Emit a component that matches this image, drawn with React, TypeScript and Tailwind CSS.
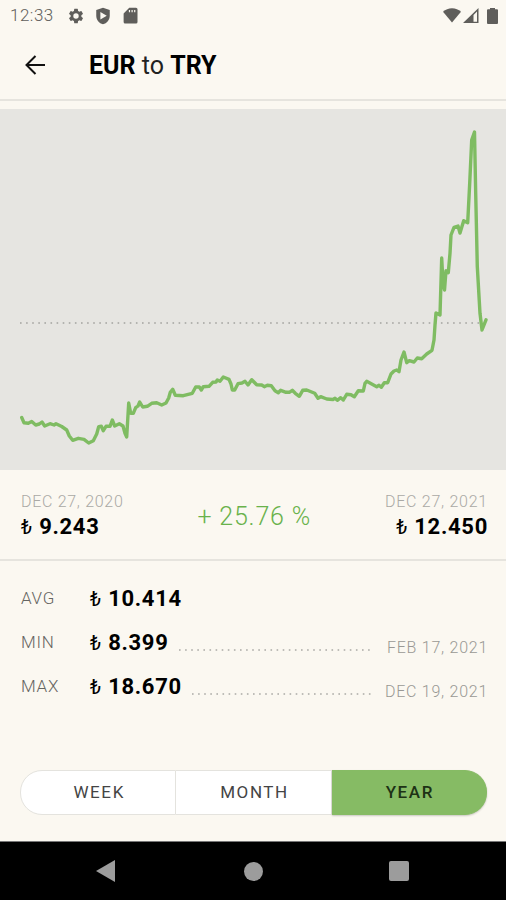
import React, { useState } from 'react';

interface StatRowProps {
    label: string;
    value: string;
    date?: string;
}

const periods = ['WEEK', 'MONTH', 'YEAR'];

// rate history as x,y pairs in the chart's viewBox
const ratePoints = [
    '21.7,417.5 24,422.7 28.3,423.2 31.7,421.5 35.7,425 39.3,424 42,422 44.7,426 50,423.7 54,425 56,423.7 61.7,426.5 66.7,430',
    '69.3,436 72.7,440.3 78.3,438.3 84,439.3 88.7,443 93.3,440.7 96.7,434 98.7,426.7 101.3,426.3 103.3,430.7 106,426.3 110,426.3',
    '112.3,420 114.7,426 119.3,423.7 123,426 125,433.3 126.7,437 128.7,403 130.7,413.3 133.3,413.3 135.7,407.7 138,406 139.7,402',
    '142.7,407 147.3,406.3 151.7,403.3 156.7,402.7 161.7,405 166,403 168.7,398 170.3,392.3 172.7,389.3 175.3,395.3 183.3,395.7',
    '192.3,393.3 195.7,387 199.3,387 201.3,390 203.3,386.7 209,386.3 212.7,382.3 216,382 217.3,380 220,381.3 223.3,377 229,379.3',
    '231,384 232.3,390 234.7,390 238,383.7 242,383 245,381.3 248,385 251.7,379.7 256.7,384.7 261.7,385 264.3,386.7 267.3,385.3',
    '271.3,385.7 275,390.7 278.3,392.7 280.7,390.3 286,392.3 289.3,392.3 292.3,390.3 295.3,393.3 299.3,396.3 302.7,390.3 306.7,390',
    '314.7,393.3 318,398.3 320.7,396.7 326.7,399 333,399.5 335,398.3 337.3,400.3 340.7,397.7 343.3,400 346.7,394.3 351,394.7',
    '354.3,396.7 358.3,390.7 363.3,391 365,383.3 366.7,381.3 371.7,384 376.7,386.7 379,385.3 381.3,387.3 384.3,382.7 387.7,382.7',
    '391,374 394,371 396.7,370 399,371.7 401,360 404,352 406.7,362.7 409.3,360.7 414,362 417.3,358 421.7,358.7 426.7,354 432,350.3',
    '434,340 435,325 436,313 440,315 441.7,258 443,283 444.5,290 446,270.7 448.3,272.7 450,253.3 451,235 454,227.3 458,226',
    '460,233 463.7,220.7 467.7,222.7 469.7,183.3 471.7,140 474.5,132 475.7,193.3 477.3,266.7 480,313.3 482,330 486,319.8',
].join(' ');

function StatusBar() {
    return (
        <div className="flex h-8 items-center justify-between pl-[10px] pr-2 text-[#5f5e5b]">
            <div className="flex items-center">
                <span className="w-[57px] text-[17px] font-light tracking-[0.5px]">12:33</span>
                {/* settings */}
                <svg className="h-[18px] w-[18px]" viewBox="0 0 24 24" fill="currentColor">
                    <path
                        fillRule="evenodd"
                        d="M19.14 12.94a7 7 0 0 0 0-1.88l2.03-1.58a.5.5 0 0 0 .12-.61l-1.92-3.32a.5.5 0 0 0-.59-.22l-2.39.96a7 7 0 0 0-1.62-.94l-.36-2.54a.5.5 0 0 0-.48-.41h-3.84a.5.5 0 0 0-.47.41l-.36 2.54c-.59.24-1.13.57-1.62.94l-2.39-.96a.5.5 0 0 0-.59.22L2.74 8.87a.5.5 0 0 0 .12.61l2.03 1.58a7 7 0 0 0 0 1.88l-2.03 1.58a.5.5 0 0 0-.12.61l1.92 3.32c.12.22.37.29.59.22l2.39-.96c.5.38 1.03.7 1.62.94l.36 2.54c.05.24.24.41.48.41h3.84c.24 0 .44-.17.47-.41l.36-2.54a7 7 0 0 0 1.62-.94l2.39.96c.22.08.47 0 .59-.22l1.92-3.32a.5.5 0 0 0-.12-.61zM12 8.400a3.600 3.600 0 1 1 0 7.200 3.600 3.600 0 0 1 0-7.200z"
                    />
                </svg>
                {/* play protect */}
                <svg className="ml-[9px] h-[18px] w-[18px]" viewBox="0 0 24 24" fill="currentColor">
                    <path fillRule="evenodd" d="M12 1 3 4v7.500c0 5.600 3.800 10 9 11.500 5.200-1.500 9-5.900 9-11.500V4zM8.500 6.500 17 11.500 8.500 16.500z" />
                </svg>
                {/* sd card */}
                <svg className="ml-[9px] h-[18px] w-[18px]" viewBox="0 0 24 24" fill="currentColor">
                    <path fillRule="evenodd" d="M20 1h-9L3.500 8.500V20a2 2 0 0 0 2 2H20a2 2 0 0 0 2-2V3a2 2 0 0 0-2-2zM10.500 4h1.600v3h-1.600zm3.500 0h1.600v3H14zm3.500 0h1.600v3h-1.600z" />
                </svg>
            </div>
            <div className="flex items-center">
                <svg className="h-4 w-[18px]" viewBox="0 0 18 16" fill="currentColor">
                    <path d="M9 14.500 0 3.700C2.500 1.500 5.500.3 9 .3s6.500 1.200 9 3.400z" />
                </svg>
                <svg className="ml-[2px] h-4 w-4" viewBox="0 0 16 16" fill="currentColor">
                    <path fillRule="evenodd" d="M0 15 15.500 0v15zM10.500 7v6.800H14V3.400z" />
                </svg>
                <svg className="ml-2 h-[17px] w-[11px]" viewBox="0 0 11 17" fill="currentColor">
                    <path d="M3 0h5v1.300h2a1 1 0 0 1 1 1V15a1 1 0 0 1-1 1H1a1 1 0 0 1-1-1V2.300a1 1 0 0 1 1-1h2z" />
                </svg>
            </div>
        </div>
    );
}

function Price({ value }: { value: string }) {
    return (
        <span className="flex items-baseline text-[22px] font-bold leading-[26px] tracking-[0.7px] text-black">
            <span className="mr-[7px] text-[20px] font-normal tracking-normal">₺</span>
            {value}
        </span>
    );
}

function StatRow({ label, value, date }: StatRowProps) {
    return (
        <div className="flex h-11 items-center">
            <span className="w-[69px] text-[17px] font-light tracking-[0.7px] text-[#666561]">{label}</span>
            <Price value={value} />
            {date && (
                <>
                    <DottedLine className="ml-[10px] mr-[14px] mt-[14px] flex-1" />
                    <span className="mt-[9px] text-[16px] font-light tracking-[0.75px] text-[#999894]">{date}</span>
                </>
            )}
        </div>
    );
}

function DottedLine({ className }: { className: string }) {
    return (
        <svg className={'h-[2px] min-w-0 ' + className}>
            <line x1="0" y1="1" x2="100%" y2="1" stroke="#aaa9a5" strokeWidth="1.5" strokeDasharray="1.600 4.500" />
        </svg>
    );
}

export default function App() {
    const [period, setPeriod] = useState('YEAR');

    return (
        <div className="flex h-[900px] w-[506px] flex-col overflow-hidden bg-[#fbf8f1] font-[Roboto,sans-serif]">
            <StatusBar />
            <header className="flex h-[69px] items-center border-b-2 border-[#e6e4de] pb-[2px] pl-[25px]">
                <button aria-label="Back">
                    <svg className="h-5 w-5" viewBox="0 0 20 20" fill="none" stroke="#111" strokeWidth="2">
                        <path d="M20 10H1.500M10.500 1 1.500 10l9 9" />
                    </svg>
                </button>
                <h1 className="ml-11 pt-[3px] text-[25px] text-black">
                    <b>EUR</b> <span className="text-[#222]">to</span> <b>TRY</b>
                </h1>
            </header>

            {/* rate chart */}
            <svg className="mt-2 h-[361px] w-full shrink-0 bg-[#e6e5e1]" viewBox="0 109 506 361" fill="none">
                <line x1="20" y1="323" x2="480" y2="323" stroke="#a3a29f" strokeWidth="1.500" strokeDasharray="1.600 4.500" />
                <polyline points={ratePoints} stroke="#7fbc62" strokeWidth="3.400" strokeLinecap="round" strokeLinejoin="round" />
            </svg>

            {/* first and last rate of the period */}
            <section className="flex h-[91px] items-center justify-between border-b-2 border-[#e6e4de] pl-[21px] pr-[18px]">
                <div>
                    <p className="text-[16px] font-light leading-6 tracking-[0.7px] text-[#aaa9a5]">DEC 27, 2020</p>
                    <Price value="9.243" />
                </div>
                <p className="pt-1 text-[25px] font-light tracking-[0.8px] text-[#69b24b]">+ 25.76 %</p>
                <div className="flex flex-col items-end">
                    <p className="text-[16px] font-light leading-6 tracking-[0.75px] text-[#aaa9a5]">DEC 27, 2021</p>
                    <Price value="12.450" />
                </div>
            </section>

            <section className="flex flex-col pl-[21px] pr-[18px] pt-4">
                <StatRow label="AVG" value="10.414" />
                <StatRow label="MIN" value="8.399" date="FEB 17, 2021" />
                <StatRow label="MAX" value="18.670" date="DEC 19, 2021" />
            </section>

            {/* period switch */}
            <div className="ml-5 mr-[19px] mt-[61px] flex h-[45px]">
                {periods.map((name) => (
                    <button
                        key={name}
                        onClick={() => setPeriod(name)}
                        className={
                            'flex-1 border pl-[2px] text-[17px] tracking-[1.6px] first:rounded-l-[22px] last:rounded-r-[22px] not-first:border-l-0 ' +
                            (period === name
                                ? 'border-[#86bb64] bg-[#86bb64] font-medium text-[#1d3215] shadow-[0_1px_2px_rgba(0,0,0,0.2)]'
                                : 'border-[#e4e3de] bg-white text-[#444]')
                        }
                    >
                        {name}
                    </button>
                ))}
            </div>

            {/* android navigation */}
            <nav className="mt-auto flex h-[59px] items-center border-t border-[#777] bg-black pl-24 text-[#9c9c9c]">
                <svg className="h-[22px] w-[19px]" viewBox="0 0 19 22" fill="currentColor">
                    <path d="M19 0v22L0 11z" />
                </svg>
                <span className="ml-[129px] h-[19px] w-[19px] rounded-full bg-[#9c9c9c]" />
                <span className="ml-[126px] h-5 w-5 rounded-[2px] bg-[#9c9c9c]" />
            </nav>
        </div>
    );
}
